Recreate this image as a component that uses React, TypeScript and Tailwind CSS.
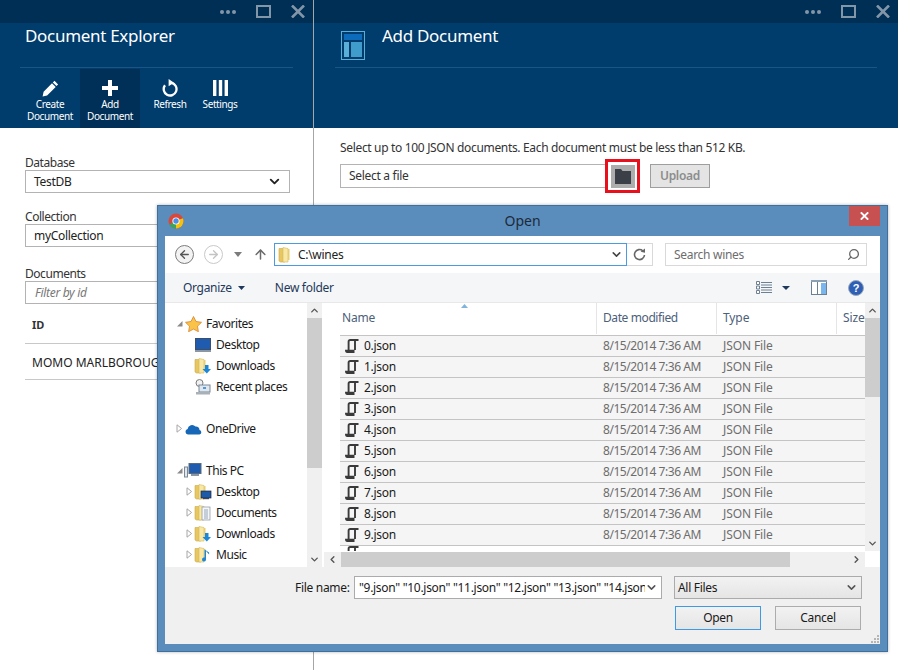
import { ChevronDown, ChevronLeft, ChevronRight, ChevronUp, Search, ArrowLeft, ArrowRight, ArrowUp } from 'lucide-react';

const files = ['0', '1', '2', '3', '4', '5', '6', '7', '8', '9'];

function Folder({ overlay }: { overlay?: 'screen' | 'doc' | 'down' | 'music' }) {
  return (
    <svg width="18" height="17" viewBox="0 0 18 17" className="shrink-0">
      <path d="M1 2.5h5l1 1.5v12H2.5L1 15z" fill="#e9c75f" stroke="#c9a94a" strokeWidth="0.6" />
      <path d="M5 1.5l5 1v13.5H5z" fill="#f8e8a6" stroke="#d4b85e" strokeWidth="0.6" />
      <path d="M10 3h1.5v11H10z" fill="#e8cd75" />
      {overlay === 'screen' && (
        <>
          <rect x="7" y="8" width="10" height="7" fill="#1d5aa8" stroke="#223" strokeWidth="0.7" />
          <rect x="9" y="15" width="6" height="1.2" fill="#445" />
        </>
      )}
      {overlay === 'doc' && (
        <>
          <rect x="8" y="3" width="8" height="13" fill="#f4f6f8" stroke="#8a939c" strokeWidth="0.7" />
          <path d="M10 6h4M10 8h4M10 10h4M10 12h4M10 14h4" stroke="#7d92a8" strokeWidth="0.8" />
        </>
      )}
      {overlay === 'down' && <path d="M11 8h3.5v4H17l-4.2 4.5L8.5 12H11z" fill="#1c86d8" />}
      {overlay === 'music' && <path d="M12 5v8.5a2 2 0 1 1-1.4-1.9V3.5l4.5 3v2z" fill="#1c86d8" />}
    </svg>
  );
}

// the scroll glyph windows uses for unknown file types
function JsonIcon() {
  return (
    <svg width="14" height="14" viewBox="0 0 14 14" className="shrink-0">
      <path d="M3.6 11V2.6Q3.6 1 5.2 1H13.5" fill="none" stroke="#3a3a3a" strokeWidth="1.9" />
      <path d="M10 1.5V11" stroke="#3a3a3a" strokeWidth="1.9" />
      <path d="M0 10.8h9.5v3.2H2.2Q0 14 0 10.8z" fill="#3a3a3a" />
    </svg>
  );
}

function Caret({ open }: { open?: boolean }) {
  return open ? (
    <svg width="7" height="7" viewBox="0 0 7 7" className="shrink-0">
      <path d="M6.5 1v5.5H1z" fill="#8a8a8a" />
    </svg>
  ) : (
    <svg width="7" height="9" viewBox="0 0 7 9" className="shrink-0">
      <path d="M1 .8l4.6 3.7L1 8.2z" fill="#fff" stroke="#a6a6a6" />
    </svg>
  );
}

function NavRow({ indent, caret, icon, label, className }: { indent: string; caret?: 'open' | 'closed'; icon: React.ReactNode; label: string; className?: string }) {
  return (
    <div className={`flex h-[21px] items-center ${indent} ${className ?? ''}`}>
      <div className="flex w-[10px] justify-center">{caret && <Caret open={caret === 'open'} />}</div>
      <div className="flex w-[18px] justify-center">{icon}</div>
      <span className="ml-[4px] text-[12px] tracking-[-0.45px] text-[#1a1a1a]">{label}</span>
    </div>
  );
}

function BladeBar() {
  return (
    <div className="flex h-[23px] items-center justify-end gap-[20px] bg-[#002f55] pr-[8px]">
      <div className="flex gap-[2px]">
        <span className="h-[4px] w-[4px] rounded-full bg-[#8296a8]" />
        <span className="h-[4px] w-[4px] rounded-full bg-[#8296a8]" />
        <span className="h-[4px] w-[4px] rounded-full bg-[#8296a8]" />
      </div>
      <span className="h-[13px] w-[15px] border-[2.5px] border-[#8296a8]" />
      <svg width="14" height="13" viewBox="0 0 14 13">
        <path d="M1 .5l12 12M13 .5l-12 12" stroke="#8296a8" strokeWidth="2.6" />
      </svg>
    </div>
  );
}

function ToolButton({ icon, lines, active, w }: { icon: React.ReactNode; lines: string[]; active?: boolean; w: string }) {
  return (
    <div className={`flex flex-col items-center pt-[10px] ${w} ${active ? 'bg-[#002f57]' : ''}`}>
      <div className="flex h-[18px] items-center">{icon}</div>
      <div className="mt-[1px] text-center text-[10px] leading-[12px] tracking-[-0.4px] text-white whitespace-nowrap">
        {lines.map((l) => (
          <div key={l}>{l}</div>
        ))}
      </div>
    </div>
  );
}

function LeftBlade() {
  return (
    <div className="w-[314px] shrink-0 border-r border-[#a6a6a6]">
      <div className="h-[128px] bg-[#003c6c]">
        <BladeBar />
        <div className="mx-[20px] h-[45px] border-b border-[#1b5585] pl-[5px] text-[17px] leading-[26px] text-white">Document Explorer</div>
        <div className="ml-[20px] mt-[1px] flex h-[59px]">
          <ToolButton
            w="w-[60px]"
            lines={['Create', 'Document']}
            icon={
              <svg width="17" height="17" viewBox="0 0 17 17">
                <path d="M12.5.8l3.6 3.6-1.6 1.7-3.7-3.7zM10 3.2l3.7 3.7-8.6 8.5L.6 16.4l1-4.6z" fill="#fff" />
              </svg>
            }
          />
          <ToolButton
            w="w-[60px]"
            active
            lines={['Add', 'Document']}
            icon={
              <svg width="16" height="16" viewBox="0 0 16 16">
                <path d="M6 0h4v6h6v4h-6v6H6v-6H0V6h6z" fill="#fff" />
              </svg>
            }
          />
          <ToolButton
            w="w-[60px]"
            lines={['Refresh']}
            icon={
              <svg width="17" height="18" viewBox="0 0 17 18">
                <path d="M9.5 3.8A6.4 6.4 0 1 1 3 6.2" fill="none" stroke="#fff" strokeWidth="2.3" />
                <path d="M6.6 0l5.4 3.7-5.4 3.6z" fill="#fff" />
              </svg>
            }
          />
          <ToolButton
            w="w-[40px]"
            lines={['Settings']}
            icon={
              <svg width="15" height="16" viewBox="0 0 15 16">
                <path d="M0 0h3.4v16H0zM5.8 0h3.4v16H5.8zM11.6 0H15v16h-3.4z" fill="#fff" />
              </svg>
            }
          />
        </div>
      </div>
      <div className="pl-[25px] pr-[23px] pt-[28px] text-[12px] text-[#333]">
        <div className="leading-[14px] tracking-[-0.45px]">Database</div>
        <div className="flex h-[23px] items-center justify-between border border-[#b3b3b3] pl-[8px] pr-[7px] text-[#222]">
          TestDB
          <ChevronDown size={15} strokeWidth={3} color="#222" />
        </div>
        <div className="mt-[17px] leading-[14px] tracking-[-0.45px]">Collection</div>
        <div className="flex h-[23px] items-center border border-[#b3b3b3] pl-[8px] text-[#222]">myCollection</div>
        <div className="mt-[20px] leading-[14px] tracking-[-0.45px]">Documents</div>
        <div className="flex h-[23px] items-center border border-[#b3b3b3] pl-[9px] italic text-[#777]">Filter by id</div>
      </div>
      <div className="mx-[25px] mt-[11px]">
        <div className="h-[29px] border-b border-[#c8c8c8] pl-[7px] text-[11px] font-bold leading-[20px] tracking-normal text-[#333]">ID</div>
        <div className="h-[36px] border-b border-[#c8c8c8] pl-[7px] text-[12px] leading-[38px] tracking-normal text-[#222] whitespace-nowrap">MOMO MARLBOROUGH</div>
      </div>
    </div>
  );
}

function RightBlade() {
  return (
    <div className="min-w-0 flex-1">
      <div className="h-[128px] bg-[#003c6c]">
        <BladeBar />
        <div className="mx-[21px] flex h-[45px] border-b border-[#1b5585] pl-[6px]">
          <svg width="24" height="29" viewBox="0 0 24 29" className="mt-[8px] shrink-0">
            <rect x="0.5" y="0.5" width="23" height="28" fill="none" stroke="#59afd8" />
            <rect x="3" y="3" width="18" height="6" fill="#0d6bbb" />
            <rect x="3" y="11" width="5" height="15" fill="#59afd8" />
            <rect x="10" y="11" width="11" height="15" fill="#3f9ccb" />
          </svg>
          <div className="ml-[17px] text-[17px] leading-[26px] text-white">Add Document</div>
        </div>
      </div>
      <div className="pl-[26px] pt-[12px]">
        <div className="text-[12px] leading-[16px] tracking-[-0.33px] text-[#333] whitespace-nowrap">Select up to 100 JSON documents. Each document must be less than 512 KB.</div>
        <div className="mt-[3px] flex items-center">
          <div className="flex h-[24px] w-[266px] items-center border border-[#b3b3b3] pl-[8px] text-[12px] text-[#333]">Select a file</div>
          <div className="-ml-[1px] flex h-[34px] w-[35px] items-center justify-center border-[3px] border-[#e8101c] bg-white">
            <div className="flex h-[23px] w-[24px] items-center justify-center bg-[#adadad]">
              <svg width="16" height="15" viewBox="0 0 16 15">
                <path d="M0 0h6l1.5 2H16v13H0z" fill="#3b3f47" />
              </svg>
            </div>
          </div>
          <div className="ml-[10px] flex h-[24px] w-[60px] items-center justify-center border border-[#9e9e9e] bg-[#e4e4e4] text-[12px] font-semibold text-[#8c8c8c]">Upload</div>
        </div>
      </div>
    </div>
  );
}

function ColHead({ label, w, first, tracking }: { label: string; w: string; first?: boolean; tracking: string }) {
  return (
    <div className={`flex h-[31px] shrink-0 items-center pb-[2px] text-[12px] text-[#4c607a] ${tracking} ${w} ${first ? 'pl-[2px]' : 'border-l border-[#e5e5e5] pl-[6px]'}`}>{label}</div>
  );
}

function FileDialog() {
  return (
    <div className="absolute left-[157px] top-[205px] flex h-[447px] w-[731px] flex-col border border-[#3f6f9c] bg-[#5a8dbc] px-[7px] pb-[7px] shadow-[0_0_3px_rgba(0,0,0,0.3)]">
      {/* title bar */}
      <div className="relative flex h-[30px] shrink-0 items-center justify-center pb-[2px] text-[14px] tracking-normal text-[#1d2a3a]">
        <svg width="16" height="16" viewBox="0 0 16 16" className="absolute left-[3px] top-[7px]">
          <circle cx="8" cy="8" r="7.5" fill="#d9483b" />
          <path d="M8 8L1.3 11.5A7.5 7.5 0 0 0 8 15.5z" fill="#3da35a" />
          <path d="M8 8l6.9-2.8A7.5 7.5 0 0 1 8 15.5z" fill="#f4c20d" />
          <circle cx="8" cy="8" r="3.6" fill="#fff" />
          <circle cx="8" cy="8" r="2.7" fill="#4a8fe8" />
        </svg>
        Open
        <div className="absolute right-0 top-0 flex h-[20px] w-[31px] items-center justify-center bg-[#c75050]">
          <svg width="9" height="8" viewBox="0 0 9 8">
            <path d="M.8.4l7.4 7.2M8.2.4L.8 7.6" stroke="#fff" strokeWidth="2" />
          </svg>
        </div>
      </div>
      {/* nav row */}
      <div className="flex h-[37px] shrink-0 items-center bg-white pl-[10px] pr-[13px]">
        <div className="flex h-[19px] w-[19px] items-center justify-center rounded-full border border-[#7c7c7c] bg-[#f3f3f3]">
          <ArrowLeft size={13} strokeWidth={2.4} color="#555" />
        </div>
        <div className="ml-[10px] flex h-[19px] w-[19px] items-center justify-center rounded-full border border-[#c9c9c9]">
          <ArrowRight size={13} strokeWidth={2.4} color="#c4c4c4" />
        </div>
        <svg width="8" height="5" viewBox="0 0 8 5" className="ml-[11px]">
          <path d="M0 0h8L4 5z" fill="#7c7c7c" />
        </svg>
        <ArrowUp size={15} strokeWidth={2.4} color="#6b6b6b" className="ml-[11px]" />
        <div className="ml-[6px] flex h-[23px] w-[353px] items-center border border-[#4a9bdf] pl-[3px] pr-[3px] text-[12px] text-[#222]">
          <Folder />
          <span className="ml-[2px] flex-1">C:\wines</span>
          <ChevronDown size={13} strokeWidth={2.8} color="#444" />
        </div>
        <div className="flex h-[23px] w-[26px] items-center justify-center border border-l-0 border-[#d9d9d9]">
          <svg width="13" height="13" viewBox="0 0 13 13">
            <path d="M9.8 2.8A5 5 0 1 0 11.5 7" fill="none" stroke="#666" strokeWidth="1.6" />
            <path d="M7.6 3.8L12 .6v4.2z" fill="#666" />
          </svg>
        </div>
        <div className="ml-[12px] flex h-[23px] flex-1 items-center justify-between border border-[#d9d9d9] pl-[8px] pr-[6px] text-[12px] text-[#6d6d6d]">
          Search wines
          <Search size={13} strokeWidth={2.4} color="#666" className="-scale-x-100" />
        </div>
      </div>
      {/* toolbar */}
      <div className="flex h-[30px] shrink-0 items-center border-b border-[#e8e8e8] bg-[#f5f6f7] pl-[18px] pr-[16px] text-[12px] text-[#1e395b]">
        <span>Organize</span>
        <svg width="7" height="4" viewBox="0 0 7 4" className="ml-[6px]">
          <path d="M0 0h7L3.5 4z" fill="#1e395b" />
        </svg>
        <span className="ml-[30px] flex-1">New folder</span>
        <svg width="16" height="13" viewBox="0 0 16 13">
          <path d="M.5.5h3v3h-3zM.5 5h3v3h-3zM.5 9.5h3v3h-3z" fill="#fff" stroke="#6d7f92" />
          <path d="M5 1.5h11M5 4h11M5 6.5h11M5 9h11M5 11.5h11" stroke="#6d7f92" />
        </svg>
        <svg width="8" height="4" viewBox="0 0 8 4" className="ml-[10px]">
          <path d="M0 0h8L4 4z" fill="#1e395b" />
        </svg>
        <svg width="16" height="15" viewBox="0 0 16 15" className="ml-[21px]">
          <rect x="0.5" y="0.5" width="15" height="14" fill="#fff" stroke="#6d7f92" />
          <rect x="0" y="0" width="16" height="2" fill="#8aa0b5" />
          <rect x="10" y="3" width="5" height="11" fill="#7ab6ee" />
          <path d="M6.5 2v12" stroke="#6d7f92" />
        </svg>
        <svg width="16" height="16" viewBox="0 0 16 16" className="ml-[21px]">
          <circle cx="8" cy="8" r="7.5" fill="#2f5fb5" stroke="#9aa9bc" />
          <text x="8" y="12" textAnchor="middle" fontSize="11" fontWeight="700" fill="#fff" fontFamily="Liberation Sans">?</text>
        </svg>
      </div>
      {/* body */}
      <div className="flex h-[264px] shrink-0 bg-white">
        <div className="w-[142px] shrink-0 overflow-hidden pt-[10px]">
          <NavRow
            indent="pl-[9px]"
            caret="open"
            label="Favorites"
            icon={
              <svg width="17" height="16" viewBox="0 0 17 16">
                <path d="M8.5.5l2.5 5 5.5.8-4 3.9.9 5.5-4.9-2.6-4.9 2.6.9-5.5-4-3.9 5.5-.8z" fill="#f9c34a" stroke="#d9822b" strokeWidth="0.8" />
              </svg>
            }
          />
          <NavRow
            indent="pl-[19px]"
            label="Desktop"
            icon={
              <svg width="16" height="14" viewBox="0 0 16 14">
                <rect x="0.5" y="0.5" width="15" height="11" fill="#1f5cb0" stroke="#3d4f66" />
                <rect x="0" y="12" width="16" height="2" fill="#8a96a3" />
              </svg>
            }
          />
          <NavRow indent="pl-[19px]" label="Downloads" icon={<Folder overlay="down" />} />
          <NavRow
            indent="pl-[19px]"
            label="Recent places"
            icon={
              <svg width="16" height="16" viewBox="0 0 16 16">
                <circle cx="4.5" cy="4" r="3.5" fill="#f1f1f1" stroke="#7a7a7a" />
                <rect x="4" y="6" width="11" height="7" fill="#dfe6ee" stroke="#7a8896" />
                <rect x="8" y="8" width="3" height="2" fill="#4a9bdf" />
                <rect x="1" y="13" width="14" height="2.5" fill="#a8b0b8" />
              </svg>
            }
          />
          <NavRow
            indent="pl-[9px]"
            className="mt-[21px]"
            caret="closed"
            label="OneDrive"
            icon={
              <svg width="17" height="12" viewBox="0 0 17 12">
                <path d="M3 11.5A2.8 2.8 0 0 1 2.6 6 4.5 4.5 0 0 1 10.5 3.5 3.5 3.5 0 0 1 14.5 7 2.3 2.3 0 0 1 14.5 11.5z" fill="#1767b8" />
              </svg>
            }
          />
          <NavRow
            indent="pl-[9px]"
            className="mt-[21px]"
            caret="open"
            label="This PC"
            icon={
              <svg width="18" height="15" viewBox="0 0 18 15">
                <rect x="5" y="0.5" width="12" height="10" fill="#1f5cb0" stroke="#5b6b7c" />
                <rect x="0.5" y="4" width="3" height="10" fill="#e3e6ea" stroke="#7a8896" />
                <rect x="7" y="11" width="8" height="2" fill="#8a96a3" />
              </svg>
            }
          />
          <NavRow indent="pl-[19px]" caret="closed" label="Desktop" icon={<Folder overlay="screen" />} />
          <NavRow indent="pl-[19px]" caret="closed" label="Documents" icon={<Folder overlay="doc" />} />
          <NavRow indent="pl-[19px]" caret="closed" label="Downloads" icon={<Folder overlay="down" />} />
          <NavRow indent="pl-[19px]" caret="closed" label="Music" icon={<Folder overlay="music" />} />
        </div>
        <div className="flex w-[15px] shrink-0 flex-col bg-[#f0f0f0]">
          <div className="flex h-[15px] items-center justify-center"><ChevronUp size={11} strokeWidth={3} color="#555" /></div>
          <div className="h-[150px] bg-[#cdcdcd]" />
          <div className="flex-1" />
          <div className="flex h-[15px] items-center justify-center"><ChevronDown size={11} strokeWidth={3} color="#555" /></div>
        </div>
        <div className="flex min-w-0 flex-1 flex-col pl-[2px]">
          <div className="flex min-h-0 flex-1">
            <div className="relative min-w-0 flex-1 overflow-hidden">
              <svg width="7" height="4" viewBox="0 0 7 4" className="absolute left-[137px] top-[1px]">
                <path d="M0 4h7L3.5 0z" fill="#7fb4dd" />
              </svg>
              <div className="flex pl-[16px]">
                <ColHead first label="Name" w="w-[256px]" tracking="tracking-[-0.2px]" />
                <ColHead label="Date modified" w="w-[120px]" tracking="tracking-[-0.4px]" />
                <ColHead label="Type" w="w-[120px]" tracking="tracking-[-0.1px]" />
                <ColHead label="Size" w="w-[60px]" tracking="tracking-[-0.1px]" />
              </div>
              <div className="ml-[16px] mt-[1px]">
                {files.map((f) => (
                  <div key={f} className="flex h-[21px] items-center border-t border-[#c4c4c4] bg-[#f5f5f5] text-[12px]">
                    <div className="flex w-[263px] shrink-0 items-center pl-[5px] text-[#1a1a1a]">
                      <JsonIcon />
                      <span className="ml-[5px]">{f}.json</span>
                    </div>
                    <div className="w-[120px] shrink-0 tracking-[-0.45px] text-[#6d6d6d]">8/15/2014 7:36 AM</div>
                    <div className="tracking-[-0.1px] text-[#6d6d6d]">JSON File</div>
                  </div>
                ))}
                <div className="h-[6px] border-t border-[#c4c4c4] pl-[5px]">
                  <div className="h-[5px] w-[14px] overflow-hidden"><JsonIcon /></div>
                </div>
              </div>
            </div>
            <div className="flex w-[15px] shrink-0 flex-col bg-[#f0f0f0]">
              <div className="flex h-[15px] items-center justify-center"><ChevronUp size={11} strokeWidth={3} color="#555" /></div>
              <div className="h-[79px] bg-[#cdcdcd]" />
              <div className="flex-1" />
              <div className="flex h-[15px] items-center justify-center"><ChevronDown size={11} strokeWidth={3} color="#555" /></div>
            </div>
          </div>
          <div className="flex h-[16px] shrink-0 items-center pr-[15px]">
            <div className="flex h-[15px] flex-1 bg-[#f0f0f0]">
              <div className="flex w-[17px] items-center justify-center"><ChevronLeft size={11} strokeWidth={3} color="#555" /></div>
              <div className="w-[449px] bg-[#cdcdcd]" />
              <div className="flex-1" />
              <div className="flex w-[17px] items-center justify-center"><ChevronRight size={11} strokeWidth={3} color="#555" /></div>
            </div>
          </div>
        </div>
      </div>
      {/* footer */}
      <div className="relative min-h-0 flex-1 bg-[#f0f0f0] pr-[18px] text-[12px] text-[#1a1a1a]">
        <div className="mt-[9px] flex h-[23px] items-center">
          <span className="ml-[130px] w-[59px] shrink-0">File name:</span>
          <div className="flex h-[23px] w-[308px] shrink-0 items-center border border-[#ababab] bg-white pl-[4px] pr-[3px]">
            <span className="min-w-0 flex-1 overflow-hidden whitespace-nowrap">"9.json" "10.json" "11.json" "12.json" "13.json" "14.json"</span>
            <ChevronDown size={13} strokeWidth={2.8} color="#555" />
          </div>
          <div className="ml-[12px] flex h-[23px] flex-1 items-center justify-between border border-[#ababab] bg-gradient-to-b from-[#f2f2f2] to-[#e5e5e5] pl-[3px] pr-[3px]">
            All Files
            <ChevronDown size={13} strokeWidth={2.8} color="#555" />
          </div>
        </div>
        <div className="mt-[7px] flex justify-end gap-[14px] pr-[1px]">
          <div className="flex h-[24px] w-[86px] items-center justify-center border border-[#3e9ae6] bg-gradient-to-b from-[#f2f2f2] to-[#e5e5e5]">Open</div>
          <div className="flex h-[24px] w-[86px] items-center justify-center border border-[#acacac] bg-gradient-to-b from-[#f2f2f2] to-[#e5e5e5]">Cancel</div>
        </div>
        <svg width="8" height="8" viewBox="0 0 8 8" className="absolute bottom-[1px] right-[1px]">
          <path d="M6 0h2v2H6zM3 3h2v2H3zM6 3h2v2H6zM0 6h2v2H0zM3 6h2v2H3zM6 6h2v2H6z" fill="#b5b5b5" />
        </svg>
      </div>
    </div>
  );
}

export default function App() {
  return (
    <div className="relative flex h-[670px] w-[898px] overflow-hidden bg-white font-['Noto_Sans',sans-serif] tracking-[-0.3px]">
      <LeftBlade />
      <RightBlade />
      <FileDialog />
    </div>
  );
}
